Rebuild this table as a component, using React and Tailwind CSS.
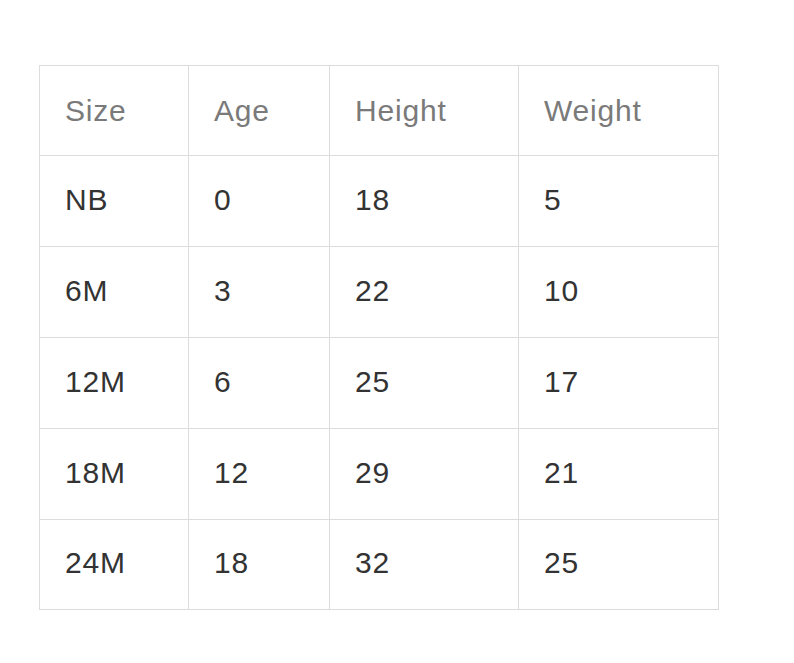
import React from "react";

const header = ["Size", "Age", "Height", "Weight"];
const rows = [
  ["NB", "0", "18", "5"],
  ["6M", "3", "22", "10"],
  ["12M", "6", "25", "17"],
  ["18M", "12", "29", "21"],
  ["24M", "18", "32", "25"],
];
const heights = ["h-[91px]", "h-[91px]", "h-[91px]", "h-[91px]", "h-[90px]"];

export default function App() {
  return (
    <div className="w-[794px] h-[663px] bg-white pt-[65px] pl-[39px]" style={{ fontFamily: '"Liberation Sans", Arial, sans-serif' }}>
      <div className="grid grid-cols-[149px_141px_189px_200px] w-[680px] border-l border-t border-[#dcdcdc]">
        {header.map((h) => (
          <div key={h} className="h-[90px] border-r border-b border-[#dcdcdc] flex items-center pl-[25px] text-[30px] tracking-[0.8px] text-[#7a7a7a]">
            {h}
          </div>
        ))}
        {rows.map((r, i) =>
          r.map((c, j) => (
            <div key={i + "-" + j} className={`${heights[i]} border-r border-b border-[#dcdcdc] flex items-center pl-[25px] pb-[4px] text-[30px] tracking-[0.8px] text-[#333333]`}>
              {c}
            </div>
          ))
        )}
      </div>
    </div>
  );
}
